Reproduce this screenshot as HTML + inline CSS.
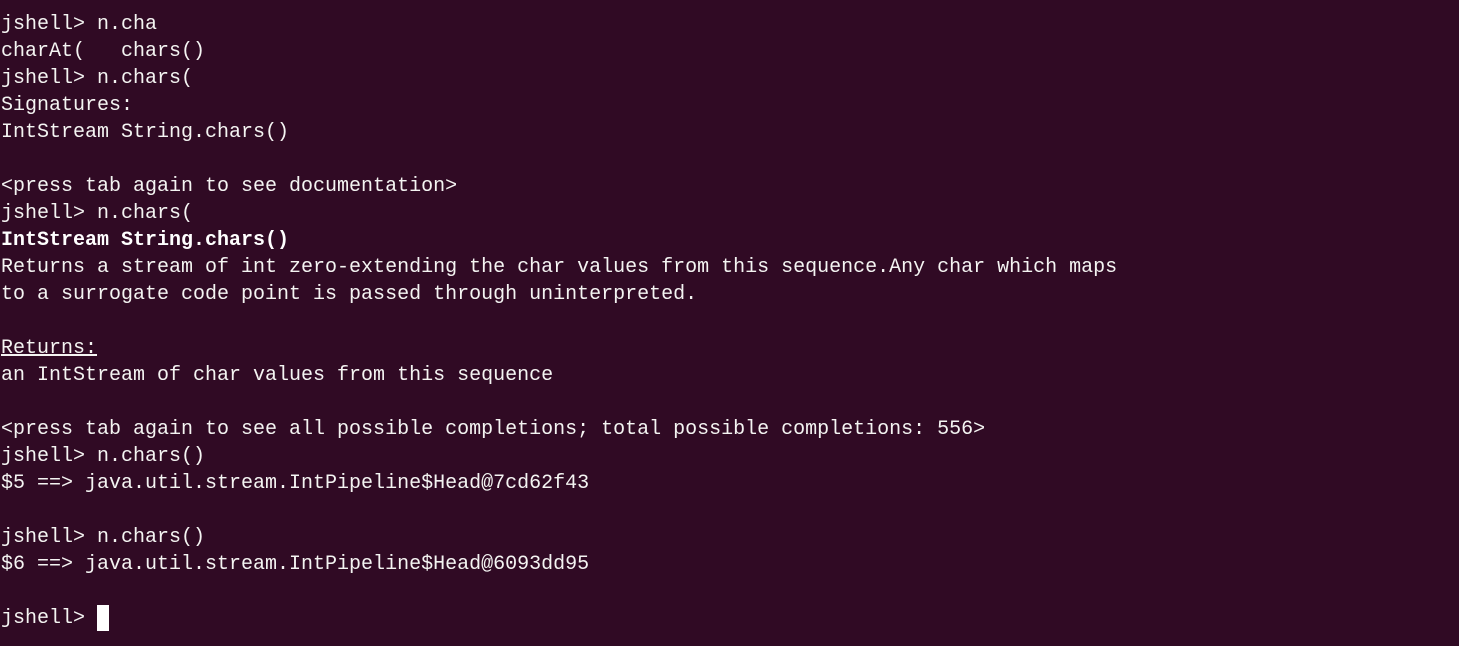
<!DOCTYPE html>
<html><head><meta charset="utf-8"><style>
html,body{margin:0;padding:0;background:#300a24;width:1459px;height:646px;overflow:hidden}
pre{margin:0;padding:11px 0 0 1px;font-family:"Liberation Mono","DejaVu Sans Mono",monospace;font-size:20px;line-height:27px;color:#f4f4f2;}
b{font-weight:bold;color:#fff}u{text-decoration:underline}
.c{display:inline-block;width:12px;height:26px;background:#fff;vertical-align:top;margin-top:0px}
</style></head><body><pre>jshell&gt; n.cha
charAt(   chars()
jshell&gt; n.chars(
Signatures:
IntStream String.chars()

&lt;press tab again to see documentation&gt;
jshell&gt; n.chars(
<b>IntStream String.chars()</b>
Returns a stream of int zero-extending the char values from this sequence.Any char which maps
to a surrogate code point is passed through uninterpreted.

<u>Returns:</u>
an IntStream of char values from this sequence

&lt;press tab again to see all possible completions; total possible completions: 556&gt;
jshell&gt; n.chars()
$5 ==&gt; java.util.stream.IntPipeline$Head@7cd62f43

jshell&gt; n.chars()
$6 ==&gt; java.util.stream.IntPipeline$Head@6093dd95

jshell&gt; <span class="c"></span></pre></body></html>
